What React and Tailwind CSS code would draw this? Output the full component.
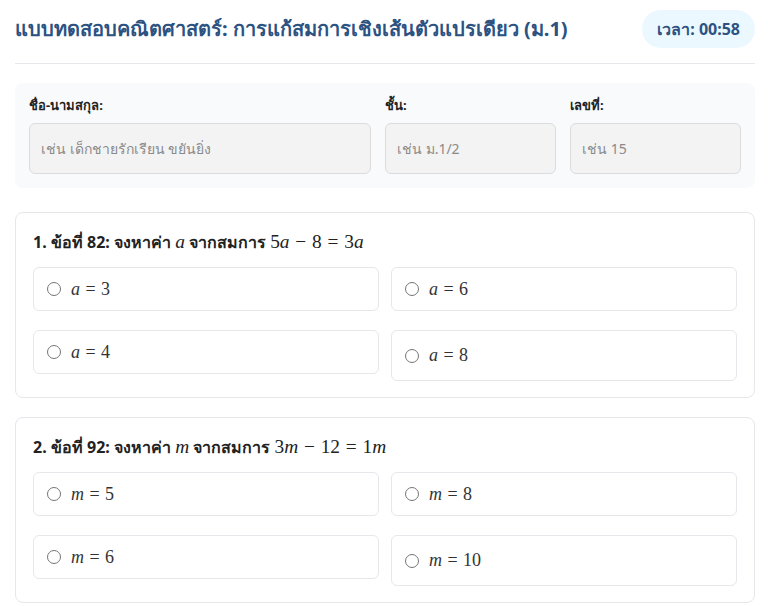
import React, { useState } from 'react';

const questions = [
  {
    no: 1,
    id: 82,
    variable: 'a',
    equation: [['5', 'a'], ['−'], ['8'], ['='], ['3', 'a']],
    choices: [3, 6, 4, 8],
  },
  {
    no: 2,
    id: 92,
    variable: 'm',
    equation: [['3', 'm'], ['−'], ['12'], ['='], ['1', 'm']],
    choices: [5, 8, 6, 10],
  },
];

// Small math renderer: italic variables, upright numbers and operators
const MathTerm = ({ parts }) => {
  const [num, v] = parts;
  const isOp = num === '−' || num === '=';
  if (isOp) return <span className="mx-[0.3em]">{num}</span>;
  return (
    <span>
      {num}
      {v && <i>{v}</i>}
    </span>
  );
};

const Math = ({ children, className = 'text-[1.21em]' }) => (
  <span className={`font-['Liberation_Serif',serif] font-normal whitespace-nowrap ${className}`}>{children}</span>
);

const Choice = ({ variable, value, tall }) => (
  <label
    className={`flex items-center gap-2.5 px-[13px] bg-white border border-[#e5e7eb] rounded-md cursor-pointer ${
      tall ? 'h-[51px]' : 'h-[44px] self-start'
    }`}
  >
    <span className="w-[14px] h-[14px] rounded-full border border-[#767676] bg-white shrink-0" />
    <Math className="text-[18px] text-[#333]">
      <i>{variable}</i>
      <span className="mx-[0.3em]">=</span>
      {value}
    </Math>
  </label>
);

const QuestionCard = ({ q }) => (
  <div className="border border-[#e5e7eb] rounded-lg bg-white px-[17px] pt-[16px] pb-[16px] mb-[19px]">
    <div className="text-[16px] font-bold text-[#222] mb-[12px] leading-[25px]">
      {q.no}. ข้อที่ {q.id}: จงหาค่า{' '}
      <Math>
        <i>{q.variable}</i>
      </Math>{' '}
      จากสมการ{' '}
      <Math>
        {q.equation.map((p, i) => (
          <MathTerm key={i} parts={p} />
        ))}
      </Math>
    </div>
    <div className="grid grid-cols-2 gap-x-3 gap-y-[19px] items-start">
      {q.choices.map((c, i) => (
        <Choice key={i} variable={q.variable} value={c} tall={i === 3} />
      ))}
    </div>
  </div>
);

export default function App() {
  const [student, setStudent] = useState({ name: '', room: '', number: '' });

  return (
    <div className="min-h-screen bg-white font-['Noto_Sans',sans-serif] text-[#333]">
      <div className="pl-[15px] pr-[13px] pt-[10px]">
        <div className="flex items-center justify-between pb-[15px] border-b border-[#e5e7eb]">
          <h1 className="text-[20px] font-bold text-[#2c5282] leading-[38px]">
            แบบทดสอบคณิตศาสตร์: การแก้สมการเชิงเส้นตัวแปรเดียว (ม.1)
          </h1>
          <div className="bg-[#ebf8ff] text-[#2c5282] font-bold text-[16px] rounded-full h-[38px] px-[15px] flex items-center">
            เวลา: 00:58
          </div>
        </div>

        <div className="mt-[19px] bg-[#f8fafc] rounded-lg px-[14px] pt-[12px] pb-[14px] grid grid-cols-[2fr_1fr_1fr] gap-x-[14px]">
          <div>
            <div className="text-[13px] font-bold text-[#222] mb-[7px] h-[21px] flex items-center">ชื่อ-นามสกุล:</div>
            <input
              value={student.name}
              onChange={(e) => setStudent({ ...student, name: e.target.value })}
              placeholder="เช่น เด็กชายรักเรียน ขยันยิ่ง"
              className="w-full h-[51px] px-[11px] bg-[#f3f3f3] border border-[#dcdcdc] rounded-md text-[14px] placeholder:text-[#8a8a8a] outline-none"
            />
          </div>
          <div>
            <div className="text-[13px] font-bold text-[#222] mb-[7px] h-[21px] flex items-center">ชั้น:</div>
            <input
              value={student.room}
              onChange={(e) => setStudent({ ...student, room: e.target.value })}
              placeholder="เช่น ม.1/2"
              className="w-full h-[51px] px-[11px] bg-[#f3f3f3] border border-[#dcdcdc] rounded-md text-[14px] placeholder:text-[#8a8a8a] outline-none"
            />
          </div>
          <div>
            <div className="text-[13px] font-bold text-[#222] mb-[7px] h-[21px] flex items-center">เลขที่:</div>
            <input
              value={student.number}
              onChange={(e) => setStudent({ ...student, number: e.target.value })}
              placeholder="เช่น 15"
              className="w-full h-[51px] px-[11px] bg-[#f3f3f3] border border-[#dcdcdc] rounded-md text-[14px] placeholder:text-[#8a8a8a] outline-none"
            />
          </div>
        </div>

        <div className="mt-[24px]">
          {questions.map((q) => (
            <QuestionCard key={q.no} q={q} />
          ))}
        </div>
      </div>
    </div>
  );
}
